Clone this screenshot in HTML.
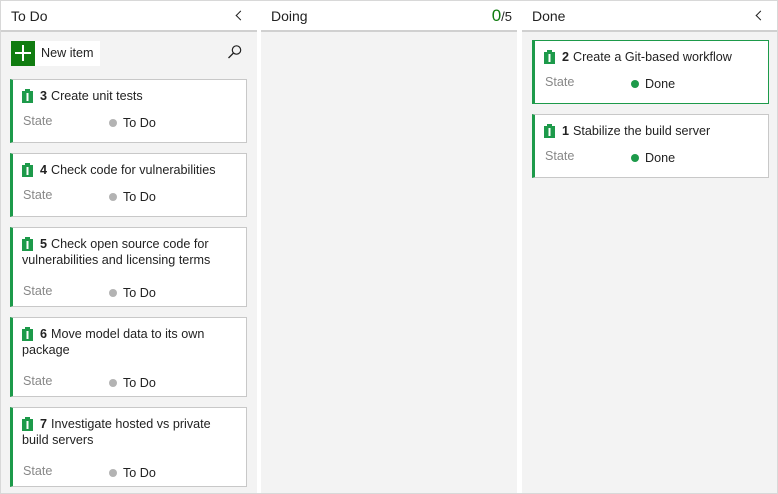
<!DOCTYPE html>
<html><head><style>
*{box-sizing:border-box;margin:0;padding:0}
body{width:778px;height:494px;background:#fff;font-family:"Liberation Sans",sans-serif;position:relative;overflow:hidden;color:#222}
.frame{position:absolute;left:0;top:0;width:778px;height:494px;border:1px solid #d8d8d8}
.col{position:absolute;top:1px;bottom:1px;background:#f3f3f3}
.hdr{position:absolute;left:0;right:0;top:0;height:31px;background:#fff;border-bottom:2px solid #d0d0d0;font-size:14px;line-height:30px;padding-left:10px}
.chev{position:absolute;right:13px;top:11px;width:7px;height:7px;border-left:1.6px solid #222;border-bottom:1.6px solid #222;transform:rotate(45deg)}
.card{position:absolute;background:#fff;border:1px solid #c8c8c8;border-left:3px solid #1d9a4a;font-size:12.6px}
.card .t{position:absolute;left:9px;top:8px;right:6px;line-height:16px}
.card .t b{margin-left:18px;margin-right:4px}
.ic{position:absolute;left:0;top:1px}
.st{position:absolute;left:10px;color:#888;font-size:12.6px}
.sv{position:absolute;left:96px;font-size:12.6px}
.dot{display:inline-block;width:8px;height:8px;border-radius:50%;background:#b3b3b3;margin-right:6px;vertical-align:0}
.g{background:#1d9a4a}
</style></head><body>
<div class="frame"></div>
<div class="col" style="left:1px;width:256px">
 <div class="hdr">To Do<div class="chev"></div></div>
 <div style="position:absolute;left:10px;top:40px;width:89px;height:25px;background:#fff"></div>
 <div style="position:absolute;left:10px;top:40px;width:24px;height:25px;background:#107c10"></div>
 <div style="position:absolute;left:14px;top:51px;width:16px;height:2px;background:#fff"></div>
 <div style="position:absolute;left:21px;top:44px;width:2px;height:16px;background:#fff"></div>
 <div style="position:absolute;left:40px;top:45px;font-size:12.6px">New item</div>
 <svg style="position:absolute;left:226px;top:43px" width="16" height="16" viewBox="0 0 16 16"><circle cx="9.5" cy="6" r="4.2" fill="none" stroke="#222" stroke-width="1.2"/><line x1="6.5" y1="9" x2="1.5" y2="14" stroke="#222" stroke-width="1.3"/></svg>
</div>
<div class="col" style="left:261px;width:256px">
 <div class="hdr">Doing<span style="position:absolute;right:5px;top:0"><span style="color:#107c10;font-size:17px">0</span><span style="font-size:13px">/5</span></span></div>
</div>
<div class="col" style="left:522px;width:255px">
 <div class="hdr">Done<div class="chev"></div></div>
</div>
<div id="cards"></div>
<script>
var ic='<svg class="ic" width="11" height="14" viewBox="0 0 11 14"><rect x="0" y="2" width="11" height="12" fill="#1d9a4a"/><rect x="3" y="0" width="5" height="3" fill="#1d9a4a"/><rect x="4.5" y="4" width="2" height="8" fill="#fff"/></svg>';
var cs=[
[10,79,237,64,'3','Create unit tests',0,'To Do',0],
[10,153,237,64,'4','Check code for vulnerabilities',0,'To Do',0],
[10,227,237,80,'5','Check open source code for vulnerabilities and licensing terms',1,'To Do',0],
[10,317,237,80,'6','Move model data to its own package',1,'To Do',0],
[10,407,237,80,'7','Investigate hosted vs private build servers',1,'To Do',0],
[532,40,237,64,'2','Create a Git-based workflow',0,'Done',1],
[532,114,237,64,'1','Stabilize the build server',0,'Done',1]];
var h='';
cs.forEach(function(c,i){
 var sy=c[6]?56:34, vy=c[6]?58:36;
 var bd=i==5?'border:1px solid #1d9a4a;border-left:3px solid #1d9a4a;':'';
 h+='<div class="card" style="left:'+c[0]+'px;top:'+c[1]+'px;width:'+c[2]+'px;height:'+c[3]+'px;'+bd+'"><div class="t">'+ic+'<b>'+c[4]+'</b>'+c[5]+'</div><div class="st" style="top:'+sy+'px">State</div><div class="sv" style="top:'+vy+'px"><span class="dot'+(c[8]?' g':'')+'"></span>'+c[7]+'</div></div>';
});
document.getElementById('cards').innerHTML=h;
</script>
</body></html>
